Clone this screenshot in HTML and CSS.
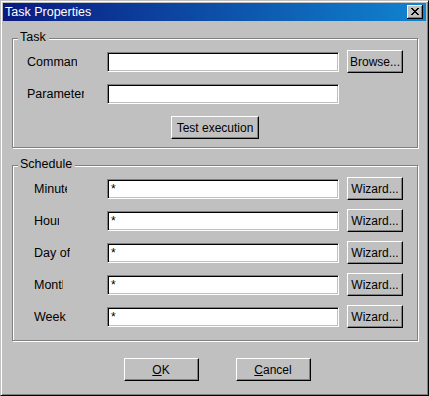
FILE: index.html
```html
<!DOCTYPE html>
<html lang="en">
<head>
    <meta charset="UTF-8">
    <title>Task Properties</title>
    <link rel="stylesheet" href="styles.css">
</head>
<body>
    <div class="window">
        <div class="titlebar">
            <span class="title">Task Properties</span>
            <button type="button" class="close-btn" aria-label="Close">
                <svg width="8" height="7" viewBox="0 0 8 7" shape-rendering="crispEdges">
                    <path d="M0 0h2v1h-2z M6 0h2v1h-2z M1 1h2v1h-2z M5 1h2v1h-2z M2 2h4v1h-4z M3 3h2v1h-2z M2 4h4v1h-4z M1 5h2v1h-2z M5 5h2v1h-2z M0 6h2v1h-2z M6 6h2v1h-2z" fill="#000"/>
                </svg>
            </button>
        </div>

        <div class="content">
            <div class="group">
                <span class="group-title">Task</span>
                <div class="row">
                    <label class="lbl"><span class="clip clip-cmd">Command</span></label>
                    <input type="text" class="field">
                    <button type="button" class="btn btn-side">Browse...</button>
                </div>
                <div class="row">
                    <label class="lbl"><span class="clip clip-param">Parameter</span></label>
                    <input type="text" class="field">
                </div>
                <div class="row row-center">
                    <button type="button" class="btn btn-test">Test execution</button>
                </div>
            </div>

            <div class="group group-schedule">
                <span class="group-title">Schedule</span>
                <div class="row">
                    <label class="lbl"><span class="clip clip-min">Minute</span></label>
                    <input type="text" class="field" value="*">
                    <button type="button" class="btn btn-side">Wizard...</button>
                </div>
                <div class="row">
                    <label class="lbl"><span class="clip clip-hour">Hour</span></label>
                    <input type="text" class="field" value="*">
                    <button type="button" class="btn btn-side">Wizard...</button>
                </div>
                <div class="row">
                    <label class="lbl"><span class="clip clip-day">Day of month</span></label>
                    <input type="text" class="field" value="*">
                    <button type="button" class="btn btn-side">Wizard...</button>
                </div>
                <div class="row">
                    <label class="lbl"><span class="clip clip-month">Month</span></label>
                    <input type="text" class="field" value="*">
                    <button type="button" class="btn btn-side">Wizard...</button>
                </div>
                <div class="row">
                    <label class="lbl"><span class="clip clip-week">Week day</span></label>
                    <input type="text" class="field" value="*">
                    <button type="button" class="btn btn-side">Wizard...</button>
                </div>
            </div>

            <div class="actions">
                <button type="button" class="btn btn-dlg"><u>O</u>K</button>
                <button type="button" class="btn btn-dlg"><u>C</u>ancel</button>
            </div>
        </div>
    </div>
</body>
</html>
```

FILE: styles.css
```css
* {
    margin: 0;
    padding: 0;
    box-sizing: border-box;
    font-family: 'Liberation Sans', Arial, sans-serif;
    font-size: 12px;
}

body {
    background: #c0c0c0;
}

.window {
    width: 429px;
    height: 396px;
    background: #c0c0c0;
    border: 1px solid;
    border-color: #c0c0c0 #000 #000 #c0c0c0;
    box-shadow: inset 1px 1px #fff, inset -1px -1px #808080;
    padding: 2px;
}

.titlebar {
    height: 18px;
    background: linear-gradient(to right, #0a1a80, #1084d0);
    display: flex;
    align-items: center;
    justify-content: space-between;
    padding: 0 3px 0 2px;
}

.title {
    color: #fff;
    font-size: 12.5px;
    line-height: 14px;
}

.close-btn {
    width: 16px;
    height: 14px;
    background: #c0c0c0;
    border: none;
    box-shadow: inset -1px -1px #000, inset 1px 1px #fff, inset -2px -2px #808080;
    display: flex;
    align-items: center;
    justify-content: center;
    padding: 0 1px 1px 0;
}

.close-btn svg {
    display: block;
}

.content {
    padding: 0 8px 0 9px;
}

.group {
    position: relative;
    margin-top: 17px;
    border: 1px solid #808080;
    box-shadow: inset 1px 1px #fff, 1px 1px #fff;
    padding: 11px 14px 8px 14px;
    display: flex;
    flex-direction: column;
    gap: 9px;
}

.group-schedule {
    padding-bottom: 12px;
}

.group-title {
    position: absolute;
    top: -9px;
    left: 5px;
    padding: 0 3px 0 2px;
    background: #c0c0c0;
    color: #000;
    font-size: 12.5px;
    line-height: 14px;
}

.row {
    display: flex;
    align-items: center;
    height: 23px;
}

.row-center {
    justify-content: center;
    margin-top: 2px;
}

.lbl {
    width: 80px;
    flex-shrink: 0;
    color: #000;
}

.group-schedule .lbl {
    padding-left: 7px;
}

.clip {
    display: block;
    overflow: hidden;
    white-space: nowrap;
    font-size: 12.5px;
}

.clip-cmd { width: 50px; }
.clip-param { width: 57px; }
.clip-min { width: 33px; }
.clip-hour { width: 25px; }
.clip-day { width: 36px; }
.clip-month { width: 29px; }
.clip-week { width: 33px; }

.field {
    width: 232px;
    height: 20px;
    background: #fff;
    border: 1px solid;
    border-color: #808080 #fff #fff #808080;
    box-shadow: inset 1px 1px #000, inset -1px -1px #c0c0c0;
    padding: 0 3px;
    color: #000;
    outline: none;
}

.btn {
    height: 23px;
    background: #c0c0c0;
    border: 1px solid;
    border-color: #fff #000 #000 #fff;
    box-shadow: inset -1px -1px #808080;
    color: #000;
    text-align: center;
    line-height: 20px;
}

.btn-side {
    width: 56px;
    margin-left: 8px;
}

.btn-test {
    width: 88px;
}

.actions {
    display: flex;
    justify-content: center;
    gap: 37px;
    margin-top: 17px;
    padding-left: 4px;
}

.btn-dlg {
    width: 75px;
}

.btn-dlg u {
    font-size: inherit;
}
```
